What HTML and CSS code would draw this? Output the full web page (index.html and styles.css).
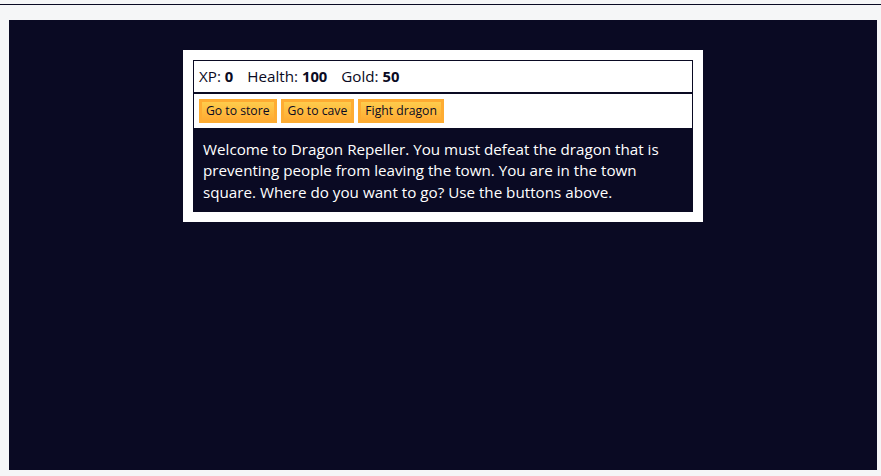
FILE: index.html
```html
<!DOCTYPE html>
<html lang="en">
<head>
<meta charset="utf-8">
<title>RPG - Dragon Repeller</title>
<link rel="stylesheet" href="styles.css">
</head>
<body>
<div class="topline"></div>
<div class="frame">
  <div id="game" class="game">
    <div id="stats" class="stats">
      <span class="stat">XP: <strong>0</strong></span>
      <span class="stat">Health: <strong>100</strong></span>
      <span class="stat">Gold: <strong>50</strong></span>
    </div>
    <div id="controls" class="controls">
      <button class="btn">Go to store</button>
      <button class="btn">Go to cave</button>
      <button class="btn">Fight dragon</button>
    </div>
    <div id="text" class="text">
      Welcome to Dragon Repeller. You must defeat the dragon that is preventing people from leaving the town. You are in the town square. Where do you want to go? Use the buttons above.
    </div>
  </div>
</div>
</body>
</html>
```
FILE: styles.css
```css
html, body {
  margin: 0;
  padding: 0;
  height: 100%;
}
body {
  background: #f5f6f7;
  font-family: "Open Sans", "Noto Sans", sans-serif;
  overflow: hidden;
}
.topline {
  height: 4px;
  border-bottom: 1px solid #0a0a23;
  margin-bottom: 15px;
}
.frame {
  margin-left: 9px;
  width: 868px;
  height: 450px;
  background: #0a0a23;
  padding-top: 30px;
  box-sizing: border-box;
}
.game {
  width: 500px;
  margin: 0 0 0 174px;
  padding: 10px;
  background: #ffffff;
  color: #ffffff;
}
.stats, .controls {
  border: 1px solid #0a0a23;
  padding: 5px;
  color: #0a0a23;
}
.stats {
  font-size: 15.2px;
  line-height: 21px;
  height: 21px;
}
.stat {
  padding-right: 10px;
}
.stats strong {
  font-weight: 700;
  font-size: 14.8px;
}
.controls {
  display: flex;
  gap: 4px;
  height: 24px;
}
.btn {
  cursor: pointer;
  font-family: "Open Sans", "Noto Sans", sans-serif;
  font-size: 12.2px;
  line-height: 18px;
  height: 24px;
  padding: 0 4px;
  color: #0a0a23;
  background-color: #feac32;
  background-image: linear-gradient(#fecc4c, #ffac33);
  border: 3px solid #feac32;
  box-sizing: border-box;
}
.text {
  background: #0a0a23;
  color: #ffffff;
  padding: 10px;
  font-size: 15.2px;
  line-height: 21.33px;
  height: 63px;
}
```
